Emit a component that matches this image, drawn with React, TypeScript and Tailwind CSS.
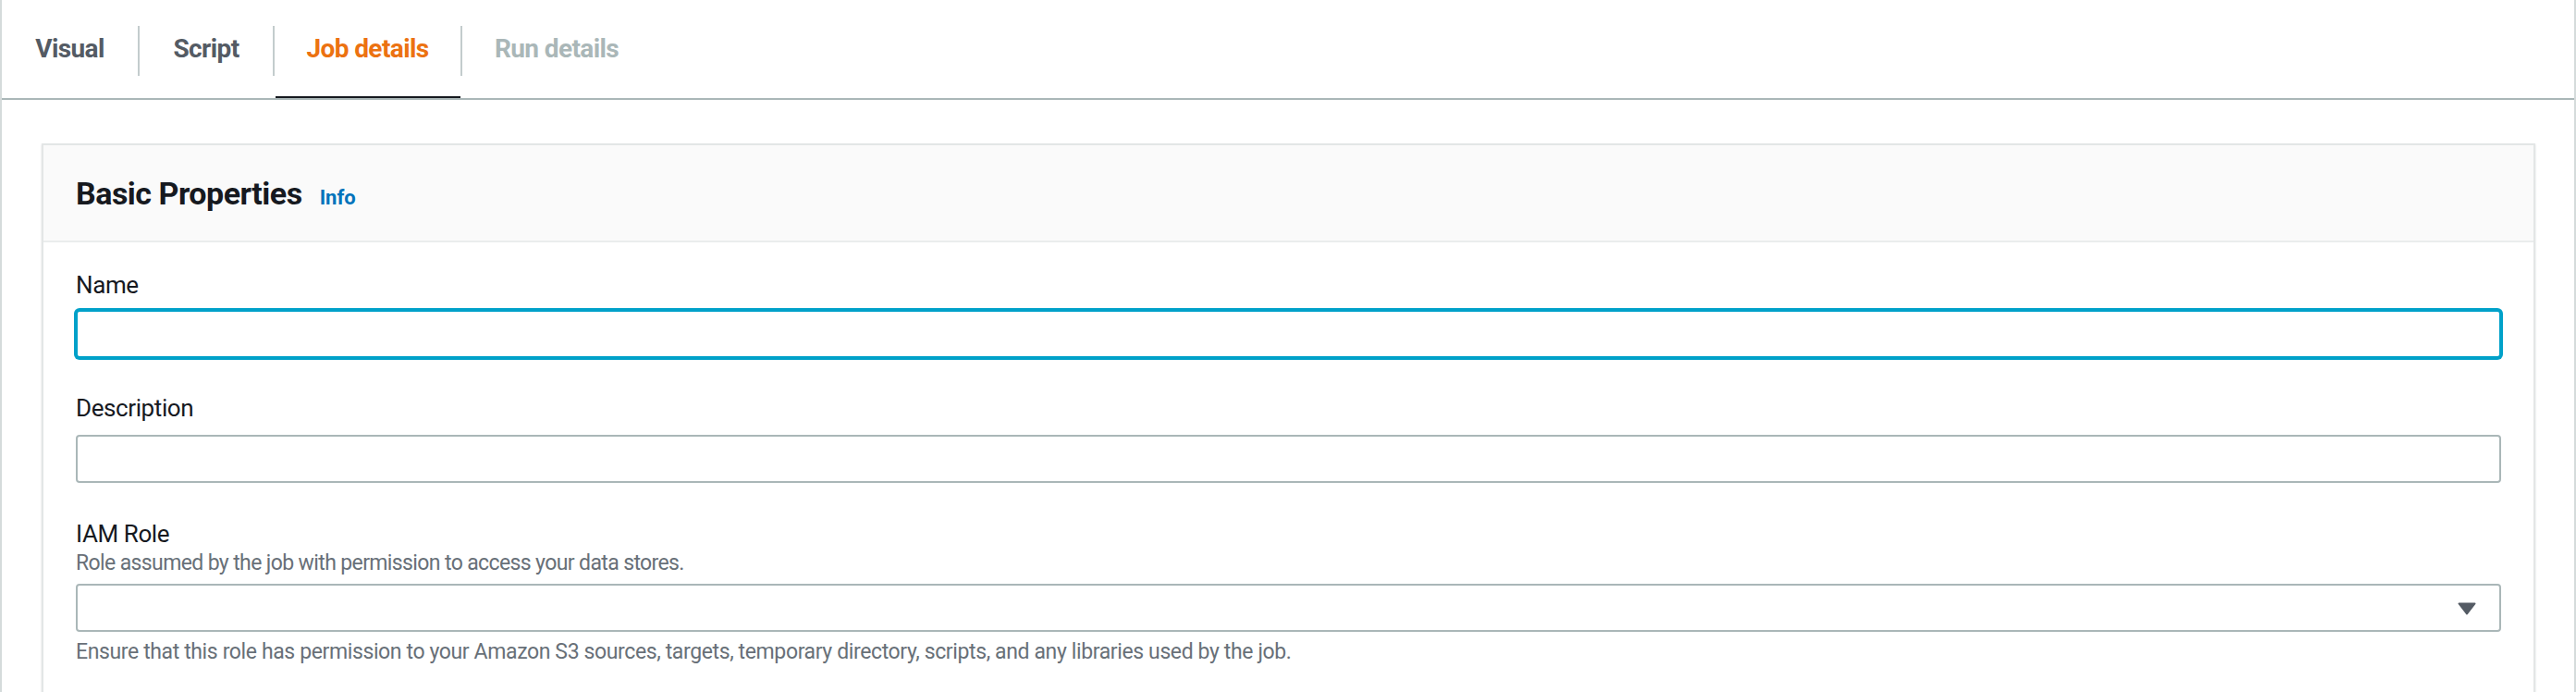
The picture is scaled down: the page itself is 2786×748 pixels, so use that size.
import React from "react";

const tabs = [
  { label: "Visual", w: "w-[147px]", state: "normal" },
  { label: "Script", w: "w-[144px]", state: "normal" },
  { label: "Job details", w: "w-[201px]", state: "active" },
  { label: "Run details", w: "w-[204px]", state: "disabled" },
];

function Tab({ label, w, state }: { label: string; w: string; state: string }) {
  const color =
    state === "active"
      ? "text-[#ec7211]"
      : state === "disabled"
      ? "text-[#aab7b8]"
      : "text-[#545b64]";
  return (
    <div className={`relative flex h-full items-center justify-center ${w}`}>
      <span className={`text-[28px] font-bold leading-[42px] tracking-[-0.6px] ${color}`}>{label}</span>
      {state === "active" && (
        <div className="absolute bottom-0 left-[1px] right-0 h-[2px] bg-[#16191f]" />
      )}
    </div>
  );
}

function Sep() {
  return <div className="mt-[4px] h-[54px] w-[2px] bg-[#c3cccd]" />;
}

export default function App() {
  return (
    <div className="h-[748px] w-[2786px] overflow-hidden border-x-2 border-[#d5dbdb] bg-white font-['Roboto','Liberation_Sans',sans-serif] antialiased">
      {/* Tab bar */}
      <div className="flex h-[108px] items-center border-b-2 border-[#aab7b8]">
        <Tab {...tabs[0]} />
        <Sep />
        <Tab {...tabs[1]} />
        <Sep />
        <Tab {...tabs[2]} />
        <Sep />
        <Tab {...tabs[3]} />
      </div>

      {/* Content */}
      <div className="pl-[43px] pr-[42px] pt-[47px]">
        <div className="border-x-2 border-t-2 border-[#e3e6e6] shadow-[0_1px_2px_0_rgba(0,28,36,0.15)]">
          {/* Header */}
          <div className="flex h-[105px] items-center border-b-2 border-[#eaeded] bg-[#fafafa] px-[35px]">
            <div className="flex items-baseline gap-[19px]">
              <h2 className="text-[34px] font-bold leading-[44px] tracking-[-0.5px] text-[#16191f]">
                Basic Properties
              </h2>
              <span className="text-[22px] font-bold text-[#0073bb]">Info</span>
            </div>
          </div>

          {/* Body */}
          <div className="flex flex-col pl-[35px] pr-[35px] pt-[29px] pb-[40px]">
            {/* Name */}
            <label className="mb-[10px] text-[26px] leading-[34px] tracking-[-0.4px] text-[#16191f]">Name</label>
            <div className="h-[52px] rounded-[4px] border-2 border-[#00a1c9] bg-white shadow-[0_0_0_2px_#00a1c9]" />

            {/* Description */}
            <label className="mb-[12px] mt-[37px] text-[26px] leading-[34px] tracking-[-0.4px] text-[#16191f]">
              Description
            </label>
            <div className="h-[52px] rounded-[4px] border-2 border-[#aab7b8] bg-white" />

            {/* IAM Role */}
            <label className="mt-[38px] text-[26px] leading-[34px] tracking-[-0.4px] text-[#16191f]">IAM Role</label>
            <p className="text-[23px] leading-[30px] tracking-[-0.62px] text-[#687078]">
              Role assumed by the job with permission to access your data stores.
            </p>
            <div className="mt-[7px] flex h-[52px] items-center justify-end rounded-[4px] border-2 border-[#aab7b8] bg-white pr-[25px]">
              <svg width="20" height="14" viewBox="0 0 20 14" className="mt-[2px]">
                <path d="M1.5 1.5 L18.5 1.5 L10 12.5 Z" fill="#545b64" stroke="#545b64" strokeWidth="2" strokeLinejoin="round" />
              </svg>
            </div>
            <p className="mt-[7px] text-[23px] leading-[30px] tracking-[-0.38px] text-[#687078]">
              Ensure that this role has permission to your Amazon S3 sources, targets, temporary directory, scripts, and any libraries used by the job.
            </p>
          </div>
        </div>
      </div>
    </div>
  );
}
